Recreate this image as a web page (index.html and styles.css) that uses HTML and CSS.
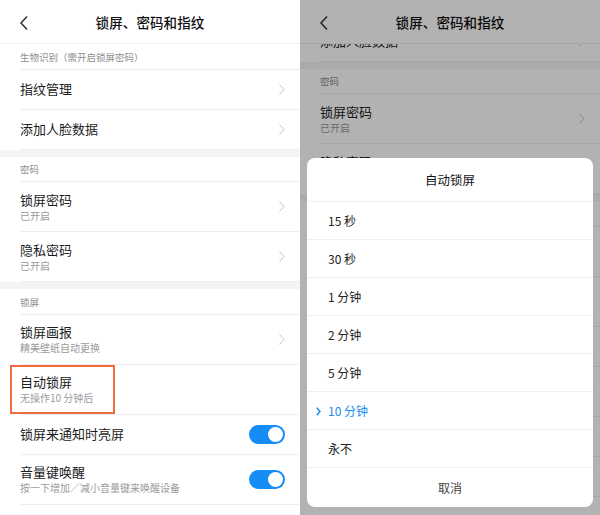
FILE: index.html
```html
<!DOCTYPE html>
<html lang="zh-CN">
<head>
<meta charset="utf-8">
<title>锁屏、密码和指纹</title>
<link rel="stylesheet" href="styles.css">
</head>
<body>
<div class="screens">
  <div class="phone">
    <header class="topbar">
      <svg class="back" width="10" height="16" viewBox="0 0 10 16"><path d="M8 1.5 L2 8 L8 14.5" fill="none" stroke="#333" stroke-width="1.5"/></svg>
      <h1 class="title">锁屏、密码和指纹</h1>
    </header>
    <div class="viewport">
      <div class="list">
        <div class="sec">生物识别（需开启锁屏密码）</div>
        <div class="row"><div class="txt"><div class="main">指纹管理</div></div><svg class="chev" width="6" height="11" viewBox="0 0 6 11"><path d="M0.5 0.5 L5 5.5 L0.5 10.5" fill="none" stroke="#c4c4c4" stroke-width="1"/></svg></div>
        <div class="row"><div class="txt"><div class="main">添加人脸数据</div></div><svg class="chev" width="6" height="11" viewBox="0 0 6 11"><path d="M0.5 0.5 L5 5.5 L0.5 10.5" fill="none" stroke="#c4c4c4" stroke-width="1"/></svg></div>
        <div class="band"></div>
        <div class="sec">密码</div>
        <div class="row row--two"><div class="txt"><div class="main">锁屏密码</div><div class="sub">已开启</div></div><svg class="chev" width="6" height="11" viewBox="0 0 6 11"><path d="M0.5 0.5 L5 5.5 L0.5 10.5" fill="none" stroke="#c4c4c4" stroke-width="1"/></svg></div>
        <div class="row row--two"><div class="txt"><div class="main">隐私密码</div><div class="sub">已开启</div></div><svg class="chev" width="6" height="11" viewBox="0 0 6 11"><path d="M0.5 0.5 L5 5.5 L0.5 10.5" fill="none" stroke="#c4c4c4" stroke-width="1"/></svg></div>
        <div class="band"></div>
        <div class="sec">锁屏</div>
        <div class="row row--two"><div class="txt"><div class="main">锁屏画报</div><div class="sub">精美壁纸自动更换</div></div><svg class="chev" width="6" height="11" viewBox="0 0 6 11"><path d="M0.5 0.5 L5 5.5 L0.5 10.5" fill="none" stroke="#c4c4c4" stroke-width="1"/></svg></div>
        <div class="row row--two row--marked"><div class="txt"><div class="main">自动锁屏</div><div class="sub">无操作10 分钟后</div></div><div class="mark"></div></div>
        <div class="row"><div class="txt"><div class="main">锁屏来通知时亮屏</div></div><div class="toggle"><span class="knob"></span></div></div>
        <div class="row row--two"><div class="txt"><div class="main">音量键唤醒</div><div class="sub">按一下增加／减小音量键来唤醒设备</div></div><div class="toggle"><span class="knob"></span></div></div>
      </div>
    </div>
  </div>

  <div class="phone">
    <header class="topbar">
      <svg class="back" width="10" height="16" viewBox="0 0 10 16"><path d="M8 1.5 L2 8 L8 14.5" fill="none" stroke="#333" stroke-width="1.5"/></svg>
      <h1 class="title">锁屏、密码和指纹</h1>
    </header>
    <div class="viewport">
      <div class="list list--scrolled">
        <div class="row"><div class="txt"><div class="main">添加人脸数据</div></div><svg class="chev" width="6" height="11" viewBox="0 0 6 11"><path d="M0.5 0.5 L5 5.5 L0.5 10.5" fill="none" stroke="#c4c4c4" stroke-width="1"/></svg></div>
        <div class="band"></div>
        <div class="sec">密码</div>
        <div class="row row--two"><div class="txt"><div class="main">锁屏密码</div><div class="sub">已开启</div></div><svg class="chev" width="6" height="11" viewBox="0 0 6 11"><path d="M0.5 0.5 L5 5.5 L0.5 10.5" fill="none" stroke="#c4c4c4" stroke-width="1"/></svg></div>
        <div class="row row--two"><div class="txt"><div class="main">隐私密码</div><div class="sub">已开启</div></div><svg class="chev" width="6" height="11" viewBox="0 0 6 11"><path d="M0.5 0.5 L5 5.5 L0.5 10.5" fill="none" stroke="#c4c4c4" stroke-width="1"/></svg></div>
        <div class="band"></div>
        <div class="sec">锁屏</div>
        <div class="row row--two"><div class="txt"><div class="main">锁屏画报</div><div class="sub">精美壁纸自动更换</div></div><svg class="chev" width="6" height="11" viewBox="0 0 6 11"><path d="M0.5 0.5 L5 5.5 L0.5 10.5" fill="none" stroke="#c4c4c4" stroke-width="1"/></svg></div>
        <div class="row row--two"><div class="txt"><div class="main">自动锁屏</div><div class="sub">无操作10 分钟后</div></div></div>
        <div class="row"><div class="txt"><div class="main">锁屏来通知时亮屏</div></div><div class="toggle"><span class="knob"></span></div></div>
        <div class="row row--two"><div class="txt"><div class="main">音量键唤醒</div><div class="sub">按一下增加／减小音量键来唤醒设备</div></div><div class="toggle"><span class="knob"></span></div></div>
        <div class="row"></div>
        <div class="row"></div>
      </div>
    </div>
    <div class="scrim"></div>
    <div class="sheet">
      <div class="sheet-title">自动锁屏</div>
      <div class="opt">15 秒</div>
      <div class="opt">30 秒</div>
      <div class="opt">1 分钟</div>
      <div class="opt">2 分钟</div>
      <div class="opt">5 分钟</div>
      <div class="opt opt--on"><svg class="tick" width="5" height="9" viewBox="0 0 5 9"><path d="M0.8 0.8 L4 4.5 L0.8 8.2" fill="none" stroke="#1a8cf0" stroke-width="1.4"/></svg>10 分钟</div>
      <div class="opt">永不</div>
      <div class="cancel">取消</div>
    </div>
  </div>
</div>
</body>
</html>
```

FILE: styles.css
```css
* { box-sizing: border-box; margin: 0; padding: 0; }
html, body { width: 600px; height: 515px; overflow: hidden; background: #fff; }
body {
  font-family: "Noto Sans CJK SC", "Noto Sans", sans-serif;
  color: #1c1c1c;
}
.screens { display: flex; width: 600px; height: 515px; }
.phone {
  position: relative;
  width: 300px;
  height: 515px;
  overflow: hidden;
  background: #fff;
  display: flex;
  flex-direction: column;
}
.topbar {
  flex: none;
  height: 44px;
  border-bottom: 1px solid #efefef;
  display: flex;
  align-items: center;
  justify-content: center;
  position: relative;
  background: #fff;
}
.back { position: absolute; left: 19px; top: 15px; }
.title { font-size: 13.5px; font-weight: 500; color: #111; letter-spacing: 0.1px; }
.viewport { flex: 1; overflow: hidden; }
.list--scrolled { margin-top: -22.5px; }
.sec {
  height: 25.5px;
  margin-left: 20px;
  border-bottom: 1px solid #eeeeee;
  font-size: 9.5px;
  color: #8e8e8e;
  display: flex;
  align-items: center;
  padding-top: 1px;
}
.band { height: 7px; background: #f4f4f4; }
.row {
  position: relative;
  height: 40px;
  margin-left: 20px;
  padding-right: 15px;
  border-bottom: 1px solid #eeeeee;
  display: flex;
  align-items: center;
  justify-content: space-between;
}
.row--two { height: 50px; }
.txt { display: flex; flex-direction: column; }
.main { font-size: 13px; line-height: 18px; color: #1c1c1c; }
.sub { font-size: 10px; line-height: 14px; color: #9a9a9a; }
.chev { flex: none; }
.mark {
  position: absolute;
  left: -10px;
  top: 0;
  width: 105px;
  height: 49px;
  border: 2.5px solid #f36c3d;
}
.toggle {
  flex: none;
  width: 36px;
  height: 19px;
  border-radius: 10px;
  background: #168cf5;
  display: flex;
  justify-content: flex-end;
  align-items: center;
  padding-right: 2px;
}
.knob { width: 15px; height: 15px; border-radius: 50%; background: #fff; }
.scrim { position: absolute; inset: 0; background: rgba(0, 0, 0, 0.3); }
.sheet {
  position: absolute;
  left: 7px;
  top: 158px;
  width: 286px;
  height: 349px;
  background: #fff;
  border-radius: 8px;
  overflow: hidden;
  display: flex;
  flex-direction: column;
}
.sheet-title {
  height: 44px;
  flex: none;
  display: flex;
  align-items: center;
  justify-content: center;
  font-size: 12.5px;
  color: #111;
  border-bottom: 1px solid #efefef;
}
.opt {
  position: relative;
  height: 38px;
  flex: none;
  padding-left: 21px;
  display: flex;
  align-items: center;
  font-size: 12px;
  color: #222;
  border-bottom: 1px solid #efefef;
}
.opt--on { color: #1a8cf0; }
.tick { position: absolute; left: 9px; top: 15px; }
.cancel {
  flex: 1;
  display: flex;
  align-items: center;
  justify-content: center;
  font-size: 12px;
  color: #444;
}
```
